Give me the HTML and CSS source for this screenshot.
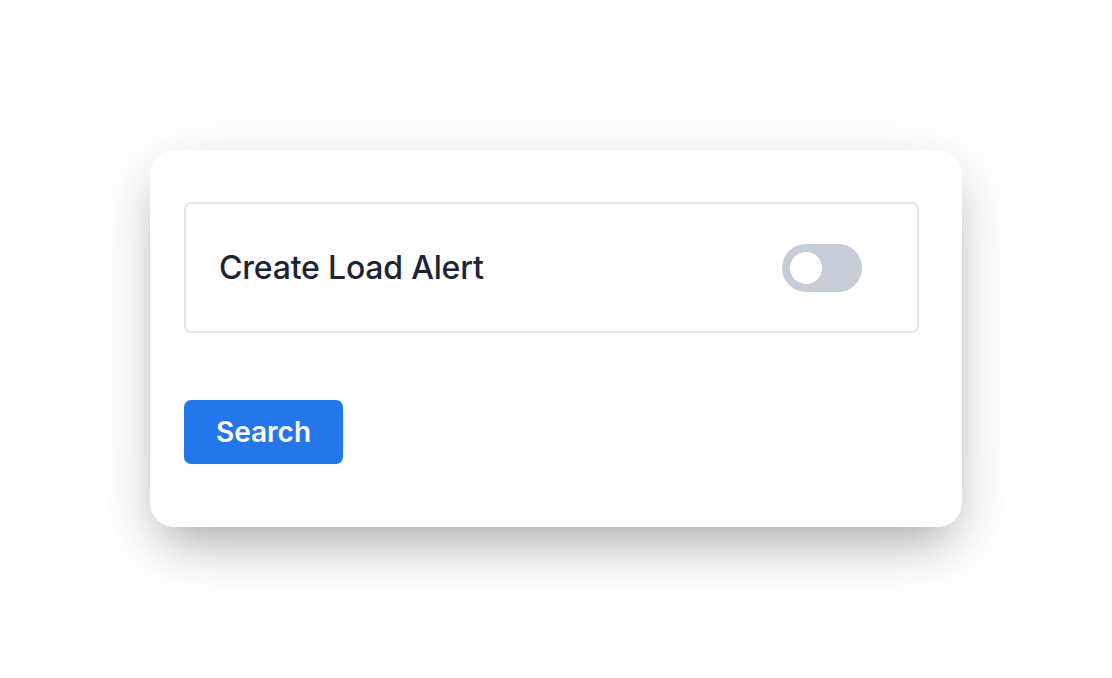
FILE: index.html
```html
<!DOCTYPE html>
<html>
<head>
<meta charset="utf-8">
<link rel="stylesheet" href="styles.css">
</head>
<body>
<div class="page">
  <div class="card">
    <div class="option">
      <span class="label">Create Load Alert</span>
      <span class="toggle"><span class="knob"></span></span>
    </div>
    <button class="search">Search</button>
  </div>
</div>
</body>
</html>
```
FILE: styles.css
```css
html, body {
  margin: 0;
  background: #ffffff;
  font-family: Inter, "Noto Sans", sans-serif;
}
.page {
  box-sizing: border-box;
  min-height: 678px;
  padding: 150px 0 0 150px;
}
.card {
  box-sizing: border-box;
  width: 812px;
  height: 377px;
  background: #ffffff;
  border-radius: 24px;
  padding: 52px 43px 0 34px;
  box-shadow: 0 25px 50px -12px rgba(0, 0, 0, 0.3), 0 12px 80px rgba(0, 0, 0, 0.07);
  display: flex;
  flex-direction: column;
  align-items: flex-start;
}
.option {
  box-sizing: border-box;
  width: 735px;
  height: 131px;
  border: 2px solid #e2e6eb;
  border-radius: 7px;
  display: flex;
  align-items: center;
  justify-content: space-between;
  padding: 0 55px 0 33px;
}
.label {
  font-size: 32px;
  font-weight: 500;
  color: #1c2434;
  letter-spacing: -0.2px;
}
.toggle {
  width: 80px;
  height: 48px;
  border-radius: 24px;
  background: #c6cdd6;
  display: flex;
  align-items: center;
  padding-left: 8px;
  box-sizing: border-box;
}
.knob {
  width: 32px;
  height: 32px;
  border-radius: 50%;
  background: #ffffff;
}
.search {
  margin-top: 67px;
  width: 159px;
  height: 64px;
  border: none;
  border-radius: 7px;
  background: #2477ea;
  color: #ffffff;
  font-family: Inter, "Noto Sans", sans-serif;
  font-size: 28px;
  font-weight: 600;
  padding: 0;
}
```
